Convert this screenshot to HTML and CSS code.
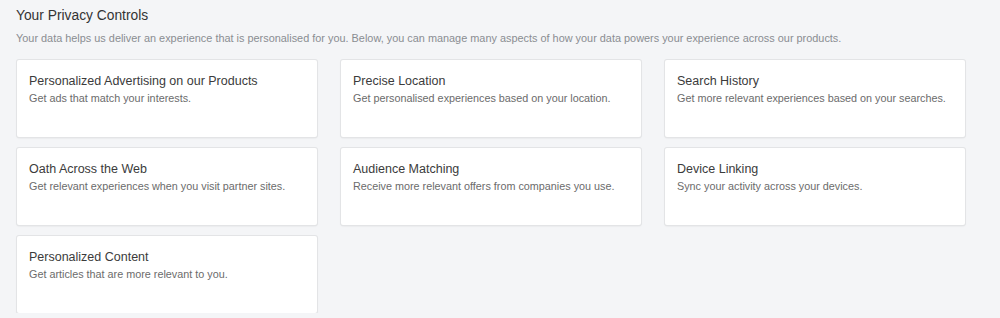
FILE: index.html
```html
<!DOCTYPE html>
<html lang="en">
<head>
  <meta charset="UTF-8" />
  <title>Your Privacy Controls</title>
  <link rel="stylesheet" href="styles.css">
</head>
<body>
<div class="page">
  <h1 class="page-title">Your Privacy Controls</h1>
  <p class="page-intro">Your data helps us deliver an experience that is personalised for you. Below, you can manage many aspects of how your data powers your experience across our products.</p>
  <div class="control-grid">
    <div class="control-card">
      <h2 class="control-title">Personalized Advertising on our Products</h2>
      <p class="control-desc">Get ads that match your interests.</p>
    </div>
    <div class="control-card">
      <h2 class="control-title">Precise Location</h2>
      <p class="control-desc">Get personalised experiences based on your location.</p>
    </div>
    <div class="control-card">
      <h2 class="control-title">Search History</h2>
      <p class="control-desc">Get more relevant experiences based on your searches.</p>
    </div>
    <div class="control-card">
      <h2 class="control-title">Oath Across the Web</h2>
      <p class="control-desc">Get relevant experiences when you visit partner sites.</p>
    </div>
    <div class="control-card">
      <h2 class="control-title">Audience Matching</h2>
      <p class="control-desc">Receive more relevant offers from companies you use.</p>
    </div>
    <div class="control-card">
      <h2 class="control-title">Device Linking</h2>
      <p class="control-desc">Sync your activity across your devices.</p>
    </div>
    <div class="control-card">
      <h2 class="control-title">Personalized Content</h2>
      <p class="control-desc">Get articles that are more relevant to you.</p>
    </div>
  </div>
</div>
</body>
</html>
```

FILE: styles.css
```css
html, body {
  margin: 0;
  padding: 0;
  background: #f4f5f7;
  font-family: 'Liberation Sans', Arial, sans-serif;
}
.page {
  padding: 7px 16px 0 16px;
}
.page-title {
  margin: 0;
  font-size: 13.8px;
  font-weight: normal;
  color: #333;
  line-height: 18px;
}
.page-intro {
  margin: 5px 0 0 0;
  font-size: 10.9px;
  line-height: 16px;
  color: #8a8d92;
}
.control-grid {
  display: grid;
  grid-template-columns: repeat(3, 300px);
  column-gap: 24px;
  row-gap: 11px;
  margin: 14px 0 0 1px;
}
.control-card {
  background: white;
  height: 77px;
  box-sizing: border-box;
  padding: 13px 12px 0 12px;
  border-radius: 2px;
  box-shadow: 0 0 0 1px #e3e4e6, 0 1px 2px rgba(0, 0, 0, 0.12);
}
.control-title {
  margin: 0;
  font-size: 12.5px;
  font-weight: normal;
  color: #3b3b3b;
  line-height: 16px;
}
.control-desc {
  margin: 2px 0 0 0;
  font-size: 10.8px;
  line-height: 15px;
  color: #6b6b6b;
}
```
